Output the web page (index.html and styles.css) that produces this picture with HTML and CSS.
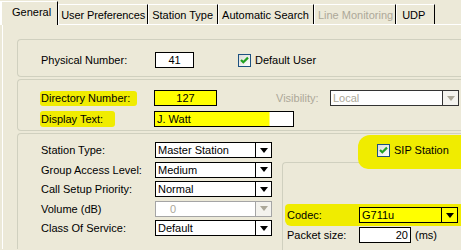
FILE: index.html
```html
<!DOCTYPE html>
<html lang="en">
<head>
    <meta charset="UTF-8">
    <meta name="viewport" content="width=device-width, initial-scale=1.0">
    <title>Station Properties</title>
    <link rel="stylesheet" href="styles.css">
</head>
<body>
    <div class="tabs">
        <div class="tab active">General</div>
        <div class="tab tight">User Preferences</div>
        <div class="tab">Station Type</div>
        <div class="tab">Automatic Search</div>
        <div class="tab disabled">Line Monitoring</div>
        <div class="tab">UDP</div>
    </div>

    <div class="panel">
        <div class="group group-physical">
            <div class="form-row">
                <span class="label">Physical Number:</span>
                <span class="textbox physical">41</span>
                <span class="checkbox default-user">
                    <span class="box">
                        <svg width="11" height="11" viewBox="0 0 11 11"><path d="M2 5 L4.3 7.3 L9 2.6" fill="none" stroke="#21a121" stroke-width="2.2"/></svg>
                    </span>
                    Default User
                </span>
            </div>
        </div>

        <div class="group group-directory">
            <div class="form-row">
                <span class="label mark directory-mark">Directory Number:</span>
                <span class="textbox directory">127</span>
                <span class="label disabled visibility">Visibility:</span>
                <span class="combo disabled visibility-combo">
                    <span class="value">Local</span>
                    <span class="arrow"><i></i></span>
                </span>
            </div>
            <div class="form-row">
                <span class="label mark display-mark">Display Text:</span>
                <span class="textbox display-text">J. Watt</span>
            </div>
        </div>

        <div class="group group-station">
            <div class="station-fields">
                <span class="label">Station Type:</span>
                <span class="combo"><span class="value">Master Station</span><span class="arrow"><i></i></span></span>

                <span class="label">Group Access Level:</span>
                <span class="combo"><span class="value">Medium</span><span class="arrow"><i></i></span></span>

                <span class="label">Call Setup Priority:</span>
                <span class="combo"><span class="value">Normal</span><span class="arrow"><i></i></span></span>

                <span class="label">Volume (dB)</span>
                <span class="combo disabled"><span class="value volume">0</span><span class="arrow"><i></i></span></span>

                <span class="label">Class Of Service:</span>
                <span class="combo"><span class="value">Default</span><span class="arrow"><i></i></span></span>
            </div>

            <div class="sip-side">
                <div class="sip-row">
                    <span class="checkbox sip">
                        <span class="box">
                            <svg width="11" height="11" viewBox="0 0 11 11"><path d="M2 5 L4.3 7.3 L9 2.6" fill="none" stroke="#21a121" stroke-width="2.2"/></svg>
                        </span>
                        SIP Station
                    </span>
                </div>
                <div class="group codec-group">
                    <div class="codec-fields">
                        <span class="label mark codec-mark">Codec:</span>
                        <span class="combo highlighted"><span class="value">G711u</span><span class="arrow"><i></i></span></span>

                        <span class="label">Packet size:</span>
                        <span class="packet">
                            <span class="textbox packet-size">20</span>
                            <span class="unit">(ms)</span>
                        </span>
                    </div>
                </div>
            </div>
        </div>
    </div>
</body>
</html>
```

FILE: styles.css
```css
body {
    margin: 0;
    width: 461px;
    height: 250px;
    overflow: hidden;
    background-color: #ece9d8;
    font-family: "Liberation Sans", Arial, sans-serif;
    font-size: 11px;
    color: #000;
}

/* tab strip */
.tabs {
    display: flex;
    align-items: flex-end;
    height: 25px;
    box-sizing: border-box;
    border-bottom: 1px solid #fff;
}
.tab {
    height: 20px;
    padding: 1px 4px 0 3px;
    border-top: 1px solid #fff;
    border-left: 1px solid #fff;
    border-right: 1px solid #000;
    box-sizing: border-box;
    display: flex;
    align-items: center;
    white-space: nowrap;
}
.tab.tight {
    padding: 1px 2px 0 2px;
    letter-spacing: -0.1px;
}
.tab.active {
    height: 24px;
    margin-bottom: -1px;
    padding: 0 6px 4px 10px;
    border-left: 2px solid #fff;
    background-color: #ece9d8;
}
.tab.disabled {
    color: #aca899;
    padding: 1px 2px 0 3px;
}
.tab:last-child {
    padding: 1px 9px 0 5px;
}

.panel {
    margin-left: 2px;
    border-left: 1px solid #fff;
    padding: 14px 0 0 14px;
}

/* group boxes run off the right edge */
.group {
    border: 1px solid #d0d0bf;
    border-right: none;
    border-radius: 4px 0 0 4px;
}
.group-physical {
    padding: 12px 0 8px 23px;
}
.group-directory {
    margin-top: 2px;
    padding: 10px 0 3px 23px;
    display: flex;
    flex-direction: column;
    gap: 5px;
}
.group-station {
    margin-top: 2px;
    padding: 8px 0 0 23px;
    display: flex;
    height: 116px;
    box-sizing: border-box;
    border-bottom: none;
    border-radius: 4px 0 0 0;
}

.form-row {
    display: flex;
    align-items: center;
    height: 16px;
}
.label {
    white-space: nowrap;
}
.form-row > .label:first-child {
    width: 113px;
    flex: none;
}
.disabled {
    color: #aca899;
}

.mark {
    background-color: #f0ec00;
    border-radius: 3px;
}
.directory-mark {
    margin-left: -1px;
    padding: 1px 0 2px 1px;
    width: 96px !important;
    margin-right: 17px;
}
.display-mark {
    margin-left: -1px;
    padding: 2px 0 2px 1px;
    width: 74px !important;
    margin-right: 39px;
}

.textbox {
    height: 16px;
    box-sizing: border-box;
    border: 1px solid #000;
    background-color: #fff;
    display: flex;
    align-items: center;
    padding: 0 2px;
}
.physical {
    width: 39px;
    margin-left: 1px;
    justify-content: center;
}
.directory {
    width: 63px;
    justify-content: center;
    background-color: #ffff00;
}
.display-text {
    width: 140px;
    background: linear-gradient(to right, #ffff00 0, #ffff00 114px, #fff 115px);
}

.checkbox {
    display: flex;
    align-items: center;
    gap: 4px;
    white-space: nowrap;
}
.box {
    width: 13px;
    height: 13px;
    box-sizing: border-box;
    border: 1px solid #1c5180;
    background: linear-gradient(135deg, #dcdcd7, #fff);
    display: flex;
    align-items: center;
    justify-content: center;
}
.default-user {
    margin-left: 44px;
}

.visibility {
    margin-left: 59px;
    width: 54px;
}
.visibility-combo {
    width: 129px;
    border-color: #333;
}

/* combo boxes */
.combo {
    display: flex;
    height: 16px;
    box-sizing: border-box;
    border: 1px solid #000;
    background-color: #fff;
}
.combo .value {
    flex: 1;
    padding-left: 2px;
    display: flex;
    align-items: center;
    white-space: nowrap;
}
.combo .arrow {
    width: 15px;
    border-left: 1px solid #000;
    display: flex;
    align-items: center;
    justify-content: center;
}
.combo .arrow i {
    width: 0;
    height: 0;
    border-left: 4px solid transparent;
    border-right: 4px solid transparent;
    border-top: 5px solid #000;
}
.combo.disabled {
    border-color: #a5a5a5;
}
.combo.disabled .arrow {
    border-left-color: #a5a5a5;
    background-color: #f4f3ee;
}
.combo.disabled .arrow i {
    border-top-color: #aca899;
}
.visibility-combo.disabled {
    border-color: #333;
}
.visibility-combo.disabled .arrow {
    border-left-color: #333;
}
.combo .volume {
    padding-left: 14px;
}

.station-fields {
    display: grid;
    grid-template-columns: 114px 117px;
    grid-auto-rows: 16px;
    row-gap: 3.5px;
    align-items: center;
    align-content: start;
}

.sip-side {
    flex: 1;
    margin-left: 10px;
}
.sip-row {
    position: relative;
    height: 16px;
    display: flex;
    align-items: center;
    padding-left: 95px;
}
.sip-row::before {
    content: "";
    position: absolute;
    left: 76px;
    right: 0;
    top: -7px;
    bottom: -11px;
    background-color: #f0ec00;
    border-radius: 12px 0 0 10px;
}
.sip {
    position: relative;
}

.codec-group {
    margin-top: 4px;
    padding: 44px 0 0 4px;
    height: 88px;
    box-sizing: border-box;
    border-bottom: none;
    border-radius: 4px 0 0 0;
}
.codec-fields {
    display: grid;
    grid-template-columns: 72px auto;
    grid-auto-rows: 16px;
    row-gap: 4px;
    align-items: center;
    position: relative;
}
.codec-fields::before {
    content: "";
    position: absolute;
    left: -2px;
    right: 0;
    top: -3px;
    height: 22px;
    background-color: #f0ec00;
    border-radius: 4px 0 0 6px;
}
.codec-mark {
    background: none;
    position: relative;
}
.combo.highlighted {
    position: relative;
    width: 99px;
    background-color: #ffff00;
}
.packet {
    display: flex;
    align-items: center;
    gap: 4px;
}
.packet-size {
    width: 52px;
    justify-content: flex-end;
}
```
